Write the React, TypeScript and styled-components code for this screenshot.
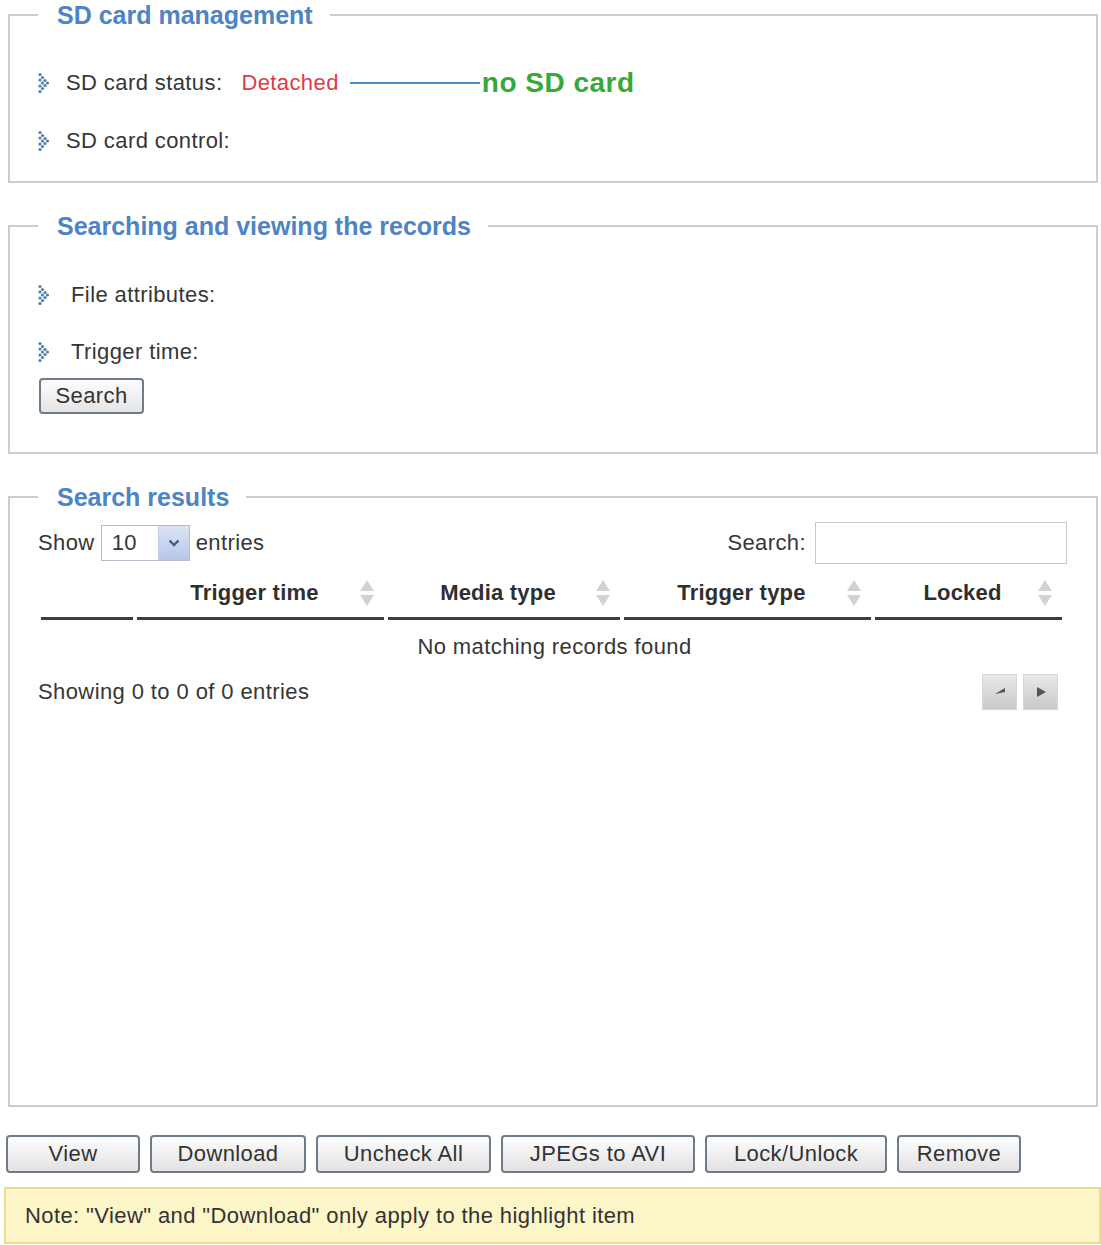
import styled, { createGlobalStyle } from "styled-components";

const GlobalStyle = createGlobalStyle`
  html, body {
    margin: 0;
    padding: 0;
    background: #ffffff;
  }
  body {
    font-family: "Liberation Sans", Arial, sans-serif;
    font-size: 22px;
    letter-spacing: 0.4px;
    color: #363636;
  }
`;

// 기본 데이터
const columns = [
  { title: "", width: 92, sortable: false },
  { title: "Trigger time", width: 247, sortable: true },
  { title: "Media type", width: 232, sortable: true },
  { title: "Trigger type", width: 247, sortable: true },
  { title: "Locked", width: 187, sortable: true },
];

const actions = [
  { label: "View", width: 134 },
  { label: "Download", width: 156 },
  { label: "Uncheck All", width: 175 },
  { label: "JPEGs to AVI", width: 194 },
  { label: "Lock/Unlock", width: 182 },
  { label: "Remove", width: 124 },
];

// 점으로 된 화살표 아이콘
const bulletDots = [
  [2, 2.5],
  [4.5, 5.5],
  [7, 8.5],
  [9.5, 11],
  [7, 13.5],
  [4.5, 16.5],
  [2, 19.5],
  [2, 8],
  [4.5, 11],
  [2, 14],
];

function Bullet() {
  return (
    <BulletIcon viewBox="0 0 12 22" width="12" height="22">
      {bulletDots.map(([cx, cy], i) => (
        <circle key={i} cx={cx} cy={cy} r="1.6" fill="#4d7fb0" />
      ))}
    </BulletIcon>
  );
}

function SortIcon() {
  return (
    <SortMark viewBox="0 0 18 30" width="18" height="30">
      <path d="M9 2 L16 13 L2 13 Z" fill="#d2d2d2" />
      <path d="M9 28 L16 17 L2 17 Z" fill="#d2d2d2" />
    </SortMark>
  );
}

function App() {
  return (
    <Page>
      <GlobalStyle />

      <FieldBox>
        <Legend>SD card management</Legend>
        <FieldBody $gap={8} $top={28} $bottom={15}>
          <FieldRow>
            <Bullet />
            <Label $indent={16}>SD card status:</Label>
            <StatusValue>Detached</StatusValue>
            <Connector />
            <Callout>no SD card</Callout>
          </FieldRow>
          <FieldRow>
            <Bullet />
            <Label $indent={16}>SD card control:</Label>
          </FieldRow>
        </FieldBody>
      </FieldBox>

      <FieldBox>
        <Legend>Searching and viewing the records</Legend>
        <FieldBody $gap={7} $top={29} $bottom={38}>
          <FieldRow>
            <Bullet />
            <Label $indent={21}>File attributes:</Label>
          </FieldRow>
          <FieldRow>
            <Bullet />
            <Label $indent={21}>Trigger time:</Label>
          </FieldRow>
          <SearchButton>Search</SearchButton>
        </FieldBody>
      </FieldBox>

      <FieldBox>
        <Legend>Search results</Legend>
        <ResultsBody>
          <Controls>
            <ShowGroup>
              Show
              <Select>
                <SelectValue>10</SelectValue>
                <SelectArrow>
                  <svg viewBox="0 0 12 8" width="12" height="8">
                    <path
                      d="M1.5 1.5 L6 6 L10.5 1.5"
                      stroke="#3d5a99"
                      strokeWidth="2.4"
                      fill="none"
                    />
                  </svg>
                </SelectArrow>
              </Select>
              entries
            </ShowGroup>
            <SearchGroup>
              Search:
              <SearchInput />
            </SearchGroup>
          </Controls>

          <Table>
            <HeaderRow>
              {columns.map((col, i) => (
                <HeaderCell key={i} $width={col.width}>
                  {col.title}
                  {col.sortable && <SortIcon />}
                </HeaderCell>
              ))}
            </HeaderRow>
            <EmptyRow>No matching records found</EmptyRow>
          </Table>

          <Footer>
            <span>Showing 0 to 0 of 0 entries</span>
            <Pager>
              <PageButton aria-label="previous">
                <svg viewBox="0 0 14 14" width="14" height="14">
                  <path d="M2 9 L12 3 L12 7 Z" fill="#555" />
                </svg>
              </PageButton>
              <PageButton aria-label="next">
                <svg viewBox="0 0 14 14" width="14" height="14">
                  <path d="M3 2 L12 7 L3 12 Z" fill="#555" />
                </svg>
              </PageButton>
            </Pager>
          </Footer>
        </ResultsBody>
      </FieldBox>

      <ActionBar>
        {actions.map((a) => (
          <ActionButton key={a.label} $width={a.width}>
            {a.label}
          </ActionButton>
        ))}
      </ActionBar>

      <Note>Note: "View" and "Download" only apply to the highlight item</Note>
    </Page>
  );
}

export default App;

const Page = styled.div`
  width: 1101px;
  padding-left: 4px;
  box-sizing: border-box;
  display: flex;
  flex-direction: column;
`;

const FieldBox = styled.fieldset`
  box-sizing: border-box;
  width: 1090px;
  margin: 0 0 28px 4px;
  padding: 0 28px;
  border: 2px solid #cdcdcd;
  min-inline-size: 0;
`;

const Legend = styled.legend`
  padding: 0 17px 0 19px;
  font-size: 25px;
  line-height: 30px;
  font-weight: bold;
  letter-spacing: 0;
  color: #4c84c4;
`;

const FieldBody = styled.div<{ $gap: number; $top: number; $bottom: number }>`
  display: flex;
  flex-direction: column;
  align-items: flex-start;
  gap: ${(p) => p.$gap}px;
  padding: ${(p) => p.$top}px 0 ${(p) => p.$bottom}px;
`;

const FieldRow = styled.div`
  display: flex;
  align-items: center;
  height: 50px;
`;

const BulletIcon = styled.svg`
  flex: none;
`;

const Label = styled.span<{ $indent: number }>`
  margin-left: ${(p) => p.$indent}px;
`;

const StatusValue = styled.span`
  margin-left: 19px;
  color: #e0394a;
`;

const Connector = styled.span`
  width: 130px;
  height: 2px;
  margin-left: 11px;
  background: #4a8cc6;
`;

const Callout = styled.span`
  margin-left: 2px;
  font-size: 28px;
  font-weight: bold;
  letter-spacing: 0.5px;
  color: #38a83a;
`;

const SearchButton = styled.button`
  margin: -6px 0 0 1px;
  width: 105px;
  height: 36px;
  font-family: inherit;
  font-size: 22px;
  letter-spacing: 0.4px;
  color: #333;
  border: 2px solid #6e7c8a;
  border-radius: 4px;
  background: linear-gradient(#fdfdfd, #e4e4e4);
  padding: 0;
`;

const ResultsBody = styled.div`
  min-height: 583px;
  padding-top: 10px;
  display: flex;
  flex-direction: column;
`;

const Controls = styled.div`
  display: flex;
  justify-content: space-between;
  align-items: center;
  height: 42px;
`;

const ShowGroup = styled.div`
  display: flex;
  align-items: center;
  gap: 6px;
`;

const Select = styled.div`
  display: flex;
  width: 89px;
  height: 36px;
  box-sizing: border-box;
  border: 1px solid #b3bccb;
  background: #fff;
`;

const SelectValue = styled.span`
  flex: 1;
  padding-left: 10px;
  line-height: 34px;
`;

const SelectArrow = styled.span`
  width: 30px;
  display: flex;
  align-items: center;
  justify-content: center;
  background: linear-gradient(#dce4f6, #b7c6e9);
  border-left: 1px solid #c3cde2;
`;

const SearchGroup = styled.div`
  display: flex;
  align-items: center;
  gap: 9px;
`;

const SearchInput = styled.div`
  width: 252px;
  height: 42px;
  box-sizing: border-box;
  border: 1px solid #c9c9c9;
  margin-right: 1px;
`;

const Table = styled.div`
  margin: 5px 0 0 3px;
  display: flex;
  flex-direction: column;
`;

const HeaderRow = styled.div`
  display: flex;
  gap: 4px;
`;

const HeaderCell = styled.div<{ $width: number }>`
  position: relative;
  box-sizing: border-box;
  width: ${(p) => p.$width}px;
  height: 51px;
  padding-right: 12px;
  display: flex;
  align-items: center;
  justify-content: center;
  font-weight: bold;
  letter-spacing: 0.2px;
  color: #2f2f2f;
  border-bottom: 3px solid #3d3d3d;
`;

const SortMark = styled.svg`
  position: absolute;
  right: 8px;
  top: 9px;
`;

const EmptyRow = styled.div`
  height: 54px;
  display: flex;
  align-items: center;
  justify-content: center;
`;

const Footer = styled.div`
  height: 36px;
  display: flex;
  align-items: center;
  justify-content: space-between;
  padding-right: 10px;
`;

const Pager = styled.div`
  display: flex;
  gap: 6px;
`;

const PageButton = styled.div`
  width: 35px;
  height: 36px;
  display: flex;
  align-items: center;
  justify-content: center;
  background: linear-gradient(#e9e9e9, #c9c9c9);
  border: 1px solid #d6d6d6;
  box-sizing: border-box;
`;

const ActionBar = styled.div`
  display: flex;
  gap: 10px;
  margin: 0 0 14px 2px;
`;

const ActionButton = styled.button<{ $width: number }>`
  width: ${(p) => p.$width}px;
  height: 38px;
  padding: 0;
  font-family: inherit;
  font-size: 22px;
  letter-spacing: 0.4px;
  color: #333;
  border: 2px solid #6e7c8a;
  border-radius: 4px;
  background: linear-gradient(#fdfdfd, #e2e2e2);
`;

const Note = styled.div`
  box-sizing: border-box;
  width: 1097px;
  height: 57px;
  padding-left: 19px;
  display: flex;
  align-items: center;
  background: #fcf6c9;
  border: 2px solid #e9dc8e;
  color: #333;
`;
